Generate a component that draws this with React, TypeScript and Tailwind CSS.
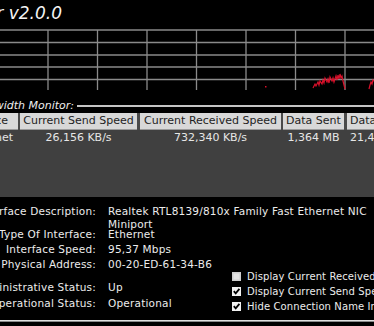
import { JSX } from "react";

interface Col {
    width: string;
    header: string;
    value: string;
    align: string;
}

// column widths + separators measured from the screenshot
const columns: Col[] = [
    { width: "w-[20px]", header: "Interface", value: "Ethernet", align: "justify-end" },
    { width: "w-[120px]", header: "Current Send Speed", value: "26,156 KB/s", align: "justify-center" },
    { width: "w-[143px]", header: "Current Received Speed", value: "732,340 KB/s", align: "justify-center" },
    { width: "w-[64px]", header: "Data Sent", value: "1,364 MB", align: "justify-center" },
    { width: "flex-1", header: "Data Received", value: "21,452 MB", align: "justify-start" },
];
const seps = ["w-[2px]", "w-[3px]", "w-[2px]", "w-[3px]"];

function Graph(): JSX.Element {
    const hs = [2, 14.5, 27, 39, 51.5];
    const vs = [48, 97.5, 147, 196.5, 246, 295.5, 345];
    const red: number[][] = [
        [313, 60], [315, 56], [316, 58], [318, 54], [319, 57], [320, 53], [322, 56], [323, 52],
        [324, 55], [325, 50], [327, 54], [328, 51], [329, 55], [330, 49], [332, 53], [333, 50],
        [334, 54], [336, 48], [337, 52], [338, 47], [339, 51], [340, 46], [341, 50], [342, 48],
        [343, 53], [344, 57], [345, 61],
    ];
    const red2: number[][] = [[369, 61], [370, 57], [371, 54], [372, 56], [373, 52], [374, 53]];
    const toPath = (pts: number[][]) => pts.map((p, i) => `${i === 0 ? "M" : "L"}${p[0]},${p[1]}`).join(" ");
    return (
        <svg width={374} height={64} className="block">
            {hs.map((y) => (
                <line key={"h" + y} x1={0} x2={374} y1={y} y2={y} stroke="#8a8a8a" strokeWidth={1.3} />
            ))}
            {vs.map((x) => (
                <line key={"v" + x} x1={x} x2={x} y1={2} y2={62} stroke="#8a8a8a" strokeWidth={1.3} />
            ))}
            <path d={toPath(red)} stroke="#d8102a" strokeWidth={1.2} fill="none" />
            <path d={toPath(red2)} stroke="#d8102a" strokeWidth={1.2} fill="none" />
            <rect x={265} y={58} width={1.5} height={1.5} fill="#d8102a" />
        </svg>
    );
}

function CheckBox({ checked }: { checked: boolean }): JSX.Element {
    return (
        <svg width={9} height={9} className="block shrink-0">
            <rect x={0} y={0} width={9} height={9} fill={checked ? "#f2f2f2" : "#cfcfcf"} />
            {checked ? (
                <path d="M1.8,4.2 L3.7,6.3 L7.4,1.9" stroke="#000" strokeWidth={1.8} fill="none" />
            ) : (
                <rect x={1.5} y={1.5} width={6} height={6} fill="#e4e4e4" />
            )}
        </svg>
    );
}

function InfoRow({ label, value, h }: { label: string; value: string; h: string }): JSX.Element {
    return (
        <div className={`flex ${h}`}>
            <div className="w-[96px] shrink-0 flex justify-end whitespace-nowrap">{label}</div>
            <div className="ml-[12px] whitespace-nowrap">{value}</div>
        </div>
    );
}

export default function App(): JSX.Element {
    return (
        <div className="w-[374px] h-[326px] overflow-hidden bg-black text-white font-['DejaVu_Sans',sans-serif]">
            {/* title */}
            <div className="h-[28px] w-[62px] flex justify-end items-end whitespace-nowrap">
                <span className="italic text-[17px] leading-[20px] pb-[5px] text-[#f4f4f4]">Bandwidth Monitor v2.0.0</span>
            </div>

            <Graph />

            {/* section label */}
            <div className="h-[21px] flex items-start pt-[8px]">
                <div className="w-[74px] flex justify-end whitespace-nowrap shrink-0">
                    <span className="italic text-[11px] leading-[12px] text-[#eeeeee]">Bandwidth Monitor:</span>
                </div>
                <div className="flex-1 h-[2px] bg-[#c4c4c4] ml-[3px] mt-[5px]" />
            </div>

            {/* list header */}
            <div className="h-[17px] flex bg-[#4a4a4a] text-[11px] text-[#1e1e1e]">
                {columns.map((c, i) => (
                    <div key={c.header} className={`flex ${c.width} shrink-0 min-w-0`}>
                        <div className={`flex-1 min-w-0 flex ${c.align} items-center whitespace-nowrap bg-[#d8d8d8] border-b border-[#9a9a9a] ${i === 0 ? "pr-[10px]" : ""} ${i === 4 ? "pl-[3px]" : ""}`}>
                            {c.header}
                        </div>
                        {i < 4 && <div className={`${seps[i]} shrink-0`} />}
                    </div>
                ))}
            </div>

            {/* list body */}
            <div className="h-[67px] bg-[#404040] text-[11px] text-[#e6e6e6]">
                <div className="h-[16px] flex">
                    {columns.map((c, i) => (
                        <div key={c.value} className={`flex ${c.width} shrink-0 min-w-0`}>
                            <div className={`flex-1 min-w-0 flex ${c.align} items-center whitespace-nowrap ${i === 0 ? "pr-[5px]" : ""} ${i === 4 ? "pl-[3px]" : ""}`}>
                                {c.value}
                            </div>
                            {i < 4 && <div className={`${seps[i]} shrink-0`} />}
                        </div>
                    ))}
                </div>
            </div>

            {/* interface details */}
            <div className="h-[123px] pt-[8px] text-[10.5px] leading-[12px] tracking-[0.2px] text-[#ececec]">
                <div className="flex">
                    <div className="w-[96px] shrink-0 flex justify-end whitespace-nowrap h-[13px]">Interface Description:</div>
                    <div className="ml-[12px] whitespace-nowrap">
                        <div className="h-[13px]">Realtek RTL8139/810x Family Fast Ethernet NIC</div>
                        <div className="h-[10px]">Miniport</div>
                    </div>
                </div>
                <div className="flex">
                    <div className="w-[232px] shrink-0">
                        <InfoRow label="Type Of Interface:" value="Ethernet" h="h-[15px]" />
                        <InfoRow label="Interface Speed:" value="95,37 Mbps" h="h-[15px]" />
                        <InfoRow label="Physical Address:" value="00-20-ED-61-34-B6" h="h-[23px]" />
                        <InfoRow label="Administrative Status:" value="Up" h="h-[16px]" />
                        <InfoRow label="Operational Status:" value="Operational" h="h-[15px]" />
                    </div>
                    <div className="flex-1 pt-[41px] whitespace-nowrap text-[10px] tracking-[0.1px]">
                        <div className="h-[15px] flex items-center gap-[6px]">
                            <CheckBox checked={false} />
                            <span>Display Current Received Speed</span>
                        </div>
                        <div className="h-[15px] flex items-center gap-[6px]">
                            <CheckBox checked={true} />
                            <span>Display Current Send Speed</span>
                        </div>
                        <div className="h-[15px] flex items-center gap-[6px]">
                            <CheckBox checked={true} />
                            <span>Hide Connection Name In Tray</span>
                        </div>
                    </div>
                </div>
            </div>

            <div className="h-[1px] bg-[#e0e0e0]" />
            <div className="h-[1px] bg-[#8a8a8a]" />
        </div>
    );
}
